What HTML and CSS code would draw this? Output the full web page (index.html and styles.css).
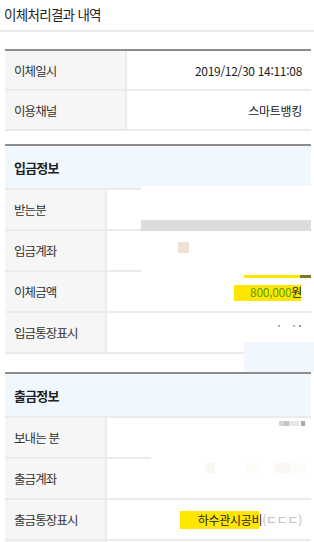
FILE: index.html
```html
<!DOCTYPE html>
<html lang="ko">
<head>
  <meta charset="UTF-8"/>
  <meta name="viewport" content="width=device-width, initial-scale=1.0"/>
  <title>이체처리결과 내역</title>
  <link rel="stylesheet" href="styles.css">
</head>
<body>
  <div class="page">
    <div class="title">이체처리결과 내역</div>

    <div class="table first">
      <div class="row">
        <div class="th">이체일시</div>
        <div class="td">2019/12/30 14:11:08</div>
      </div>
      <div class="row">
        <div class="th">이용채널</div>
        <div class="td">스마트뱅킹</div>
      </div>
    </div>

    <div class="table section deposit">
      <div class="sec-head">입금정보</div>
      <div class="row">
        <div class="th">받는분</div>
        <div class="td"></div>
      </div>
      <div class="row">
        <div class="th">입금계좌</div>
        <div class="td"></div>
      </div>
      <div class="row">
        <div class="th">이체금액</div>
        <div class="td"><span class="amount">800,000</span>원</div>
      </div>
      <div class="row">
        <div class="th">입금통장표시</div>
        <div class="td"></div>
      </div>
    </div>

    <div class="table section withdraw">
      <div class="sec-head">출금정보</div>
      <div class="row">
        <div class="th">보내는 분</div>
        <div class="td"></div>
      </div>
      <div class="row">
        <div class="th">출금계좌</div>
        <div class="td"></div>
      </div>
      <div class="row">
        <div class="th">출금통장표시</div>
        <div class="td">하수관시공비<span class="blur">(ㄷㄷㄷ)</span></div>
      </div>
      <div class="row">
        <div class="th"></div>
        <div class="td"></div>
      </div>
    </div>

    <!-- masked areas from the original capture -->
    <div class="mask white m1"><span class="gray-bar"></span></div>
    <div class="mask beige"></div>
    <div class="mask line-y"></div>
    <div class="mask line-o"></div>
    <div class="mask hl hl-amount"></div>
    <div class="mask dots d1"></div>
    <div class="mask blue-box"></div>
    <div class="mask dots d2"></div>
    <div class="mask white m2"><span class="faint"></span></div>
    <div class="mask hl hl-memo"></div>
  </div>
</body>
</html>
```

FILE: styles.css
```css
* {
  box-sizing: border-box;
  margin: 0;
  padding: 0;
}

html, body {
  height: 542px;
  overflow: hidden;
}

body {
  font-family: "Noto Sans CJK KR", "Noto Sans", sans-serif;
  background: #fff;
  color: #333;
  font-size: 12px;
}

.page {
  position: relative;
  height: 542px;
  overflow: hidden;
}

.title {
  height: 32px;
  line-height: 29px;
  padding-left: 4px;
  font-size: 13.5px;
  letter-spacing: -0.7px;
  color: #222;
  border-bottom: 2px solid #ebebeb;
}

.table {
  margin: 0 3px 0 5px;
  border-top: 2px solid #8c8c8c;
}

.table.first {
  margin-top: 17px;
}

.table.deposit {
  margin-top: 13px;
}

.table.withdraw {
  margin-top: 18px;
}

.row {
  display: flex;
  height: 41px;
  border-bottom: 2px solid #ebebeb;
}

.th {
  width: 122px;
  flex-shrink: 0;
  background: #f6f6f6;
  border-right: 2px solid #ebebeb;
  display: flex;
  align-items: center;
  padding-left: 9px;
  font-size: 12.5px;
  letter-spacing: -0.9px;
  color: #333;
}

.first .row {
  height: 40px;
}

.section .th {
  width: 102px;
}

.td {
  flex: 1;
  display: flex;
  align-items: center;
  justify-content: flex-end;
  padding-right: 9px;
  color: #222;
  letter-spacing: -0.3px;
  position: relative;
  z-index: 1;
}

.sec-head {
  height: 44px;
  background: #f0f7fe;
  border-bottom: 2px solid #ebebeb;
  display: flex;
  align-items: center;
  padding-left: 9px;
  font-weight: bold;
  font-size: 13px;
  letter-spacing: -0.8px;
  color: #222;
}

.amount {
  color: #5f9e00;
}

.blur {
  color: #b8b8b8;
}

.mask {
  position: absolute;
}

.white {
  background: #fff;
  z-index: 2;
}

.m1 {
  left: 141px;
  top: 186px;
  width: 173px;
  height: 86px;
}

.gray-bar {
  position: absolute;
  left: 0;
  top: 34px;
  width: 170px;
  height: 11px;
  background: #dcdcdc;
}

.beige {
  left: 178px;
  top: 242px;
  width: 11px;
  height: 11px;
  background: #efe2d5;
  z-index: 3;
}

.line-y {
  left: 244px;
  top: 275px;
  width: 56px;
  height: 3px;
  background: #ffe600;
}

.line-o {
  left: 300px;
  top: 275px;
  width: 11px;
  height: 3px;
  background: #7b7a25;
}

.hl {
  background: #ffe600;
  z-index: 0;
}

.hl-amount {
  left: 234px;
  top: 285px;
  width: 67px;
  height: 16px;
}

.hl-memo {
  left: 180px;
  top: 511px;
  width: 79px;
  height: 18px;
}

.dots {
  height: 2px;
  z-index: 3;
}

.d1 {
  left: 276px;
  top: 325px;
  width: 26px;
  background: linear-gradient(90deg, #fff 0 2px, #aaa 2px 4px, #fff 4px 17px, #bbb 17px 19px, #fff 19px 23px, #999 23px 25px, #fff 25px);
}

.d2 {
  left: 279px;
  top: 421px;
  width: 26px;
  height: 5px;
  background: linear-gradient(90deg, #d6d6d6 0 5px, #c4c4c4 5px 10px, #e6e6e6 10px 20px, #fff 20px 22px, #aaa 22px 26px);
}

.blue-box {
  left: 244px;
  top: 342px;
  width: 70px;
  height: 30px;
  background: #f0f7fe;
  z-index: 3;
}

.m2 {
  left: 151px;
  top: 455px;
  width: 163px;
  height: 43px;
}

.faint {
  position: absolute;
  left: 54px;
  top: 8px;
  width: 100px;
  height: 10px;
  background: linear-gradient(90deg, #fbf8f2 0 10px, #fff 10px 40px, #fafcf5 40px 55px, #fff 55px 70px, #fdf7f3 70px 85px, #fbfcf8 85px);
}
```
